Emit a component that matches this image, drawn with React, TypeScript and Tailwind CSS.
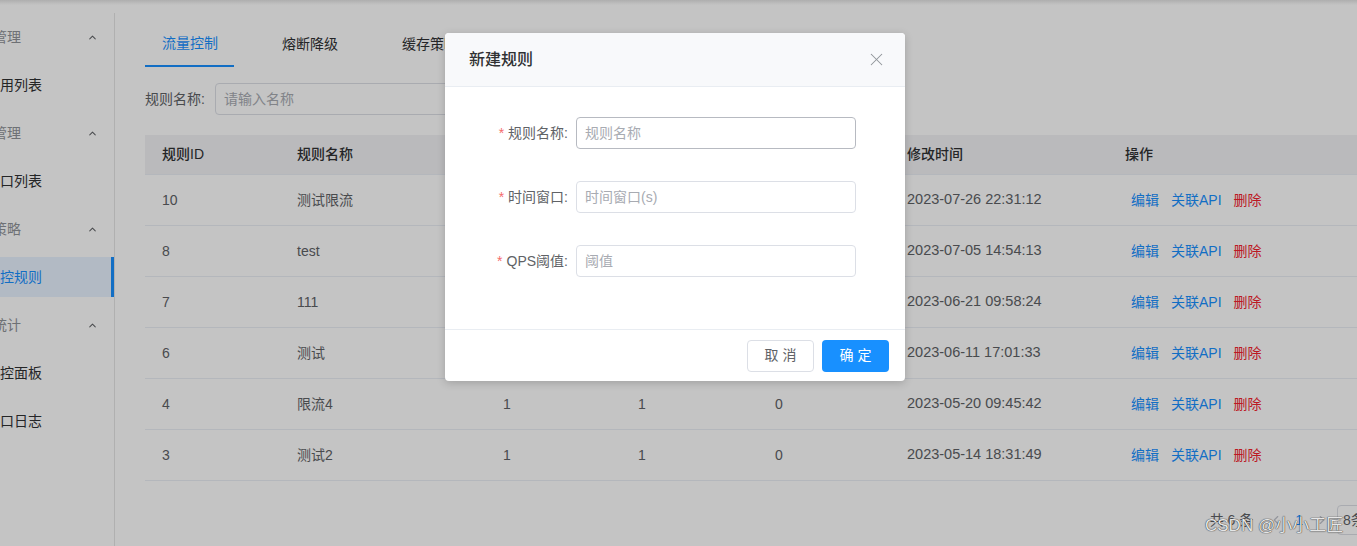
import React from 'react';
import { ChevronUp, ChevronLeft, ChevronRight, X } from 'lucide-react';

type MenuItem = { label: string; parent?: boolean; active?: boolean };

const menu: MenuItem[] = [
  { label: '应用管理', parent: true },
  { label: '应用列表' },
  { label: '接口管理', parent: true },
  { label: '接口列表' },
  { label: '限流策略', parent: true },
  { label: '流控规则', active: true },
  { label: '数据统计', parent: true },
  { label: '监控面板' },
  { label: '接口日志' },
];

const rows = [
  { id: '10', name: '测试限流', win: '1', qps: '1', status: '0', time: '2023-07-26 22:31:12' },
  { id: '8', name: 'test', win: '1', qps: '1', status: '0', time: '2023-07-05 14:54:13' },
  { id: '7', name: '111', win: '1', qps: '1', status: '0', time: '2023-06-21 09:58:24' },
  { id: '6', name: '测试', win: '1', qps: '1', status: '0', time: '2023-06-11 17:01:33' },
  { id: '4', name: '限流4', win: '1', qps: '1', status: '0', time: '2023-05-20 09:45:42' },
  { id: '3', name: '测试2', win: '1', qps: '1', status: '0', time: '2023-05-14 18:31:49' },
];

const cols = 'grid grid-cols-[135px_206px_135px_137px_132px_218px_260px]';

function Sidebar() {
  return (
    <aside className="w-[115px] shrink-0 border-r border-[#e6e6e6] pt-[4px] flex flex-col gap-2 overflow-hidden">
      {menu.map((m) => (
        <div
          key={m.label}
          className={
            'h-[40px] flex items-center justify-between pr-[16px] text-[14px] ' +
            (m.active ? 'bg-[#e8f3ff] border-r-[3px] border-[#1890ff] text-[#1890ff]' : m.parent ? 'text-[#909399]' : 'text-[#303133]')
          }
        >
          <span className={'whitespace-nowrap ' + (m.parent ? '-ml-[35px]' : '-ml-[14px]')}>{m.label}</span>
          {m.parent && <ChevronUp size={11} strokeWidth={2.2} className="text-[#606266]" />}
        </div>
      ))}
    </aside>
  );
}

function RuleTable() {
  return (
    <div className="mt-[20px] w-[1358px] text-[14px]">
      <div className={cols + ' h-[40px] items-center bg-[#f2f3f5] border-b border-[#ebeef5] text-[#303133] font-medium'}>
        <div className="pl-[17px]">规则ID</div>
        <div className="pl-[17px]">规则名称</div>
        <div className="pl-[17px]">时间窗口</div>
        <div className="pl-[17px]">阈值</div>
        <div className="pl-[17px]">状态</div>
        <div className="pl-[17px]">修改时间</div>
        <div className="pl-[17px]">操作</div>
      </div>
      {rows.map((r) => (
        <div key={r.id} className={cols + ' h-[51px] items-center border-b border-[#ebeef5] text-[#606266]'}>
          <div className="pl-[17px]">{r.id}</div>
          <div className="pl-[17px]">{r.name}</div>
          <div className="pl-[17px]">{r.win}</div>
          <div className="pl-[17px]">{r.qps}</div>
          <div className="pl-[17px]">{r.status}</div>
          <div className="pl-[17px] text-[14.5px]">{r.time}</div>
          <div className="pl-[23px] flex gap-3">
            <span className="text-[#1890ff]">编辑</span>
            <span className="text-[#1890ff]">关联API</span>
            <span className="text-[#f5222d]">删除</span>
          </div>
        </div>
      ))}
    </div>
  );
}

function FormRow({ label, placeholder, focused }: { label: string; placeholder: string; focused?: boolean }) {
  return (
    <div className="flex items-center h-[32px]">
      <label className="w-[131px] pr-[8px] flex justify-end items-center text-[14px] text-[#606266] whitespace-nowrap">
        <span className="text-[#f56c6c] mr-[4px]">*</span>
        {label}
      </label>
      <input
        readOnly
        placeholder={placeholder}
        className={
          'w-[280px] h-[32px] rounded-[4px] border px-[8px] text-[14px] outline-none placeholder:text-[#a8abb2] ' +
          (focused ? 'border-[#b7bac1]' : 'border-[#dcdfe6]')
        }
      />
    </div>
  );
}

function RuleDialog() {
  return (
    <div className="absolute left-[445px] top-[33px] w-[460px] bg-white rounded-[4px] shadow-[0_2px_8px_rgba(0,0,0,0.18)] overflow-hidden">
      <div className="h-[54px] flex items-center justify-between pl-[24px] pr-[18px] bg-[#f8f9fb] border-b border-[#e9edf2]">
        <span className="text-[16px] font-medium text-[#303133]">新建规则</span>
        <X size={21} strokeWidth={1.2} className="text-[#909399]" />
      </div>
      <div className="pt-[30px] pb-[52px] flex flex-col gap-8">
        <FormRow label="规则名称:" placeholder="规则名称" focused />
        <FormRow label="时间窗口:" placeholder="时间窗口(s)" />
        <FormRow label="QPS阈值:" placeholder="阈值" />
      </div>
      <div className="h-[52px] border-t border-[#e9edf2] flex items-center justify-end gap-2 pr-[16px]">
        <button className="w-[67px] h-[32px] rounded-[4px] border border-[#dcdfe6] bg-white text-[14px] text-[#606266] tracking-[4px] pl-[4px]">
          取消
        </button>
        <button className="w-[67px] h-[32px] rounded-[4px] bg-[#1890ff] text-[14px] text-white tracking-[4px] pl-[4px]">
          确定
        </button>
      </div>
    </div>
  );
}

export default function App() {
  return (
    <div className="relative w-[1357px] h-[546px] overflow-hidden bg-white font-['Liberation_Sans','Noto_Sans_CJK_SC',sans-serif]">
      <div className="h-[13px] bg-[linear-gradient(to_bottom,#e4e4e4,#ffffff_5px)]" />
      <div className="flex h-[533px]">
        <Sidebar />
        <main className="flex-1 pl-[30px] min-w-0">
          <div className="flex gap-8 pt-[9px]">
            <div className="h-[45px] pl-[17px] pr-[16px] flex items-center border-b-[2px] border-[#1890ff] text-[14px] text-[#1890ff]">流量控制</div>
            <div className="h-[45px] px-4 flex items-center text-[14px] text-[#303133]">熔断降级</div>
            <div className="h-[45px] px-4 flex items-center text-[14px] text-[#303133]">缓存策略</div>
            <div className="h-[45px] px-4 flex items-center text-[14px] text-[#303133]">黑白名单</div>
          </div>
          <div className="mt-4 flex items-center gap-[10px] text-[14px] text-[#606266]">
            <span>规则名称:</span>
            <input
              readOnly
              placeholder="请输入名称"
              className="w-[240px] h-[32px] rounded-[4px] border border-[#dcdfe6] px-[8px] outline-none placeholder:text-[#a8abb2]"
            />
          </div>
          <RuleTable />
          <div className="mt-[23px] -mr-[80px] flex items-center justify-end h-[32px] text-[14px] text-[#606266]">
            <span className="mr-[16px]">共 6 条</span>
            <ChevronLeft size={14} className="text-[#c0c4cc]" />
            <span className="mx-[12px] text-[#1890ff] font-medium">1</span>
            <ChevronRight size={14} className="text-[#c0c4cc]" />
            <div className="ml-[8px] w-[100px] h-[30px] rounded-[4px] border border-[#dcdfe6] flex items-center pl-[5px]">8条/页</div>
          </div>
        </main>
      </div>
      <div className="absolute inset-0 bg-black/[0.23]" />
      <RuleDialog />
      <div className="absolute left-[1205px] top-[513px] text-[17px] text-[#e6e6e6] [text-shadow:0_0_1px_#333,0_0_1px_#333] whitespace-nowrap">
        CSDN @小小工匠
      </div>
    </div>
  );
}
